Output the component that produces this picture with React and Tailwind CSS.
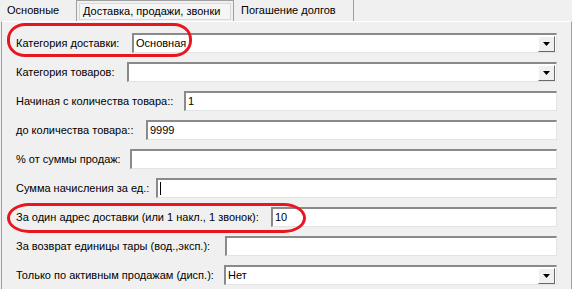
import React from 'react';

// Classic sunken edit box
const Edit = ({ value, combo }) => (
    <div className="flex-1 h-[20px] bg-white border-t-2 border-l-2 border-t-[#8a8a8a] border-l-[#8a8a8a] border-b border-r border-b-[#e3e3e3] border-r-[#e3e3e3] flex items-center">
        <span className="flex-1 pl-[2px] text-[11px] text-black leading-none whitespace-nowrap">{value}</span>
        {combo && (
            <div className="w-[17px] h-[16px] mr-[1px] bg-[#f0f0f0] border border-t-white border-l-white border-b-[#696969] border-r-[#696969] flex items-center justify-center">
                <svg width="7" height="4" viewBox="0 0 7 4"><path d="M0 0h7L3.5 4z" fill="#000" /></svg>
            </div>
        )}
    </div>
);

const rows = [
    { label: 'Категория доставки:', w: 116, value: 'Основная', combo: true },
    { label: 'Категория товаров:', w: 111, value: '', combo: true },
    { label: 'Начиная с количества товара::', w: 168, value: '1' },
    { label: 'до количества товара::', w: 130, value: '9999' },
    { label: '% от суммы продаж:', w: 114, value: '' },
    { label: 'Сумма начисления за ед.:', w: 140, value: '', caret: true },
    { label: 'За один адрес доставки (или 1 накл., 1 звонок):', w: 255, value: '10' },
    { label: 'За возврат единицы тары (вод.,эксп.):', w: 209, value: '' },
    { label: 'Только по активным продажам (дисп.):', w: 208, value: 'Нет', combo: true },
];

const App = () => {
    return (
        <div className="relative w-[572px] h-[289px] bg-[#f0f0f0] overflow-hidden text-black" style={{ fontFamily: '"Liberation Sans", Arial, sans-serif' }}>
            {/* Tabs */}
            <div className="flex h-[21px] items-end text-[11px] whitespace-nowrap">
                <div className="w-[76px] h-[21px] pl-[7px] flex items-center">Основные</div>
                <div className="w-[158px] h-[21px] border border-b-0 border-[#a0a0a0] bg-[#f0f0f0] flex items-center">
                    <div className="mx-[2px] h-[17px] flex-1 px-[3px] border border-[#d9d9d9] bg-[#f5f5f5] flex items-center">Доставка, продажи, звонки</div>
                </div>
                <div className="w-[120px] h-[21px] pl-[7px] border-r border-[#a0a0a0] flex items-center">Погашение долгов</div>
            </div>

            {/* Page panel */}
            <div className="h-[268px] border-l border-t border-r border-[#a0a0a0] border-t-white ml-[1px] mr-0 pt-[11px] pl-[14px] pr-[14px] flex flex-col gap-[9px]">
                {rows.map((r, i) => (
                    <div key={i} className="flex items-center h-[20px]">
                        <div className="shrink-0 text-[11px] whitespace-nowrap" style={{ width: r.w }}>{r.label}</div>
                        <Edit value={r.caret ? <span className="inline-block w-px h-[13px] bg-black align-middle" /> : r.value} combo={r.combo} />
                    </div>
                ))}
            </div>

            {/* Red annotation marks */}
            <div className="absolute left-[7px] top-[23px] w-[185px] h-[34px] border-[3px] border-[#e8161f] rounded-[18px/16px]" />
            <div className="absolute left-[7px] top-[203px] w-[299px] h-[30px] border-[3px] border-[#e8161f] rounded-[22px/15px]" />
        </div>
    );
};

export default App;
